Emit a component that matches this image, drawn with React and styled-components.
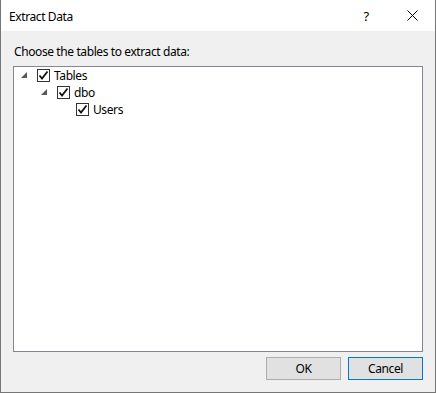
import React from "react";
import styled, { createGlobalStyle } from "styled-components";

const Global = createGlobalStyle`
  html, body { margin: 0; padding: 0; background: #f0f0f0; }
  body {
    font-family: "Segoe UI", "Noto Sans", "Liberation Sans", sans-serif;
    font-size: 12px;
    letter-spacing: -0.4px;
  }
`;

const Window = styled.div`
  width: 436px;
  height: 393px;
  box-sizing: border-box;
  border: 1px solid #767676;
  border-top: none;
  background: #f0f0f0;
  display: flex;
  flex-direction: column;
`;

const TitleBar = styled.div`
  height: 31px;
  background: #ffffff;
  display: flex;
  align-items: center;
  padding-left: 8px;
  color: #000;
`;

const Title = styled.div`
  flex: 1;
  padding-top: 1px;
`;

const TitleButton = styled.div`
  width: ${p => p.$w}px;
  height: 31px;
  display: flex;
  align-items: center;
  justify-content: center;
  color: #000;
  font-size: 13px;
`;

const Body = styled.div`
  flex: 1;
  display: flex;
  flex-direction: column;
  padding: 12px 12px 0 12px;
`;

const Prompt = styled.div`
  height: 23px;
  color: #000;
  padding-left: 1px;
`;

const TreeBox = styled.div`
  height: 286px;
  box-sizing: border-box;
  border: 1px solid #828790;
  background: #ffffff;
`;

const Row = styled.div`
  height: 17px;
  display: flex;
  align-items: center;
  padding-left: ${p => p.$indent}px;
`;

const Expander = styled.div`
  width: 16px;
  height: 17px;
  display: flex;
  align-items: center;
  justify-content: center;
  visibility: ${p => (p.$hidden ? "hidden" : "visible")};
`;

const Check = styled.div`
  width: 13px;
  height: 13px;
  box-sizing: border-box;
  border: 1px solid #333333;
  background: #fff;
  display: flex;
  align-items: center;
  justify-content: center;
  margin-left: 5px;
`;

const Label = styled.span`
  margin-left: 4px;
  color: #000;
  line-height: 17px;
`;

const Footer = styled.div`
  display: flex;
  justify-content: flex-end;
  gap: 7px;
  padding-top: 5px;
`;

const Button = styled.div`
  width: 75px;
  height: 23px;
  box-sizing: border-box;
  border: 1px solid ${p => (p.$default ? "#0078d7" : "#adadad")};
  background: #e1e1e1;
  display: flex;
  align-items: center;
  justify-content: center;
  color: #000;
`;

const Triangle = () => (
  <svg width="7" height="7" viewBox="0 0 7 7">
    <path d="M6 0 L6 6 L0 6 Z" fill="#595959" />
  </svg>
);

const Tick = () => (
  <svg width="11" height="11" viewBox="0 0 11 11">
    <path d="M1.5 5.5 L4 8.5 L9.5 1.5" fill="none" stroke="#111" strokeWidth="1.8" />
  </svg>
);

const CloseIcon = () => (
  <svg width="11" height="11" viewBox="0 0 11 11">
    <path d="M0.5 0.5 L10.5 10.5 M10.5 0.5 L0.5 10.5" stroke="#000" strokeWidth="1" />
  </svg>
);

const items = [
  { label: "Tables", indent: 2, expander: true },
  { label: "dbo", indent: 22, expander: true },
  { label: "Users", indent: 41, expander: false },
];

export default function App() {
  return (
    <>
      <Global />
      <Window>
        <TitleBar>
          <Title>Extract Data</Title>
          <TitleButton $w={46}>?</TitleButton>
          <TitleButton $w={46}>
            <CloseIcon />
          </TitleButton>
        </TitleBar>
        <Body>
          <Prompt>Choose the tables to extract data:</Prompt>
          <TreeBox>
            {items.map(it => (
              <Row key={it.label} $indent={it.indent}>
                <Expander $hidden={!it.expander}>
                  <Triangle />
                </Expander>
                <Check>
                  <Tick />
                </Check>
                <Label>{it.label}</Label>
              </Row>
            ))}
          </TreeBox>
          <Footer>
            <Button>OK</Button>
            <Button $default>Cancel</Button>
          </Footer>
        </Body>
      </Window>
    </>
  );
}
